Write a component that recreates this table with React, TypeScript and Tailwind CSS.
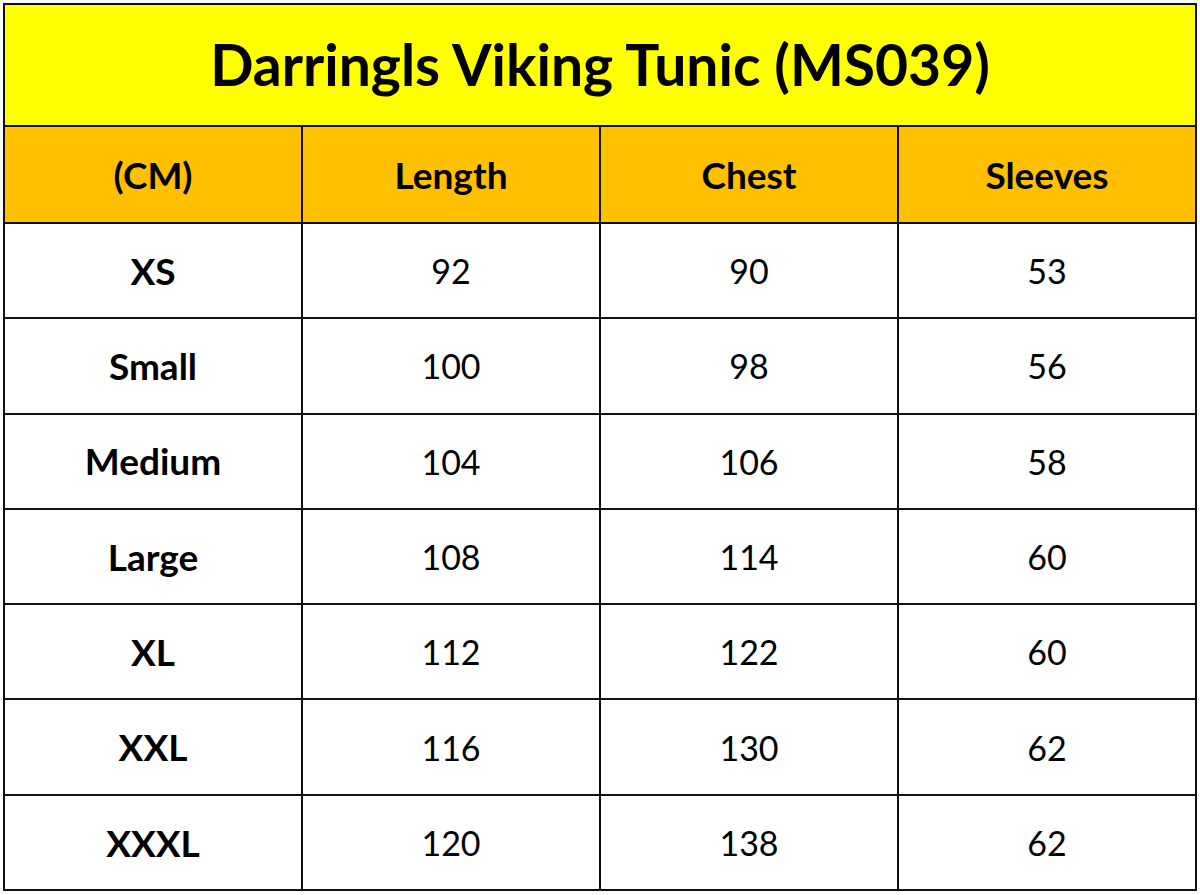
const rows: [string, number, number, number][] = [
  ["XS", 92, 90, 53],
  ["Small", 100, 98, 56],
  ["Medium", 104, 106, 58],
  ["Large", 108, 114, 60],
  ["XL", 112, 122, 60],
  ["XXL", 116, 130, 62],
  ["XXXL", 120, 138, 62],
];

const headers = ["(CM)", "Length", "Chest", "Sleeves"];

export default function App() {
  return (
    <div className="w-[1200px] h-[895px] bg-white pt-[3px] pl-[3px] font-['Lato','Liberation_Sans',sans-serif] text-black">
      <div className="w-[1194px] bg-[#111] p-[2px] grid grid-cols-4 gap-[2px]">
        <div className="col-span-4 h-[120px] bg-[#ffff00] flex items-center justify-center">
          <h1 className="text-[57px] font-bold">Darringls Viking Tunic (MS039)</h1>
        </div>
        {headers.map((h) => (
          <div key={h} className="h-[95px] bg-[#ffc000] flex items-center justify-center text-[37px] font-bold">
            {h}
          </div>
        ))}
        {rows.map(([size, length, chest, sleeves]) => (
          <div key={size} className="contents">
            <div className="h-[93.3px] bg-white flex items-center justify-center text-[37px] font-bold">{size}</div>
            <div className="h-[93.3px] bg-white flex items-center justify-center text-[34px]">{length}</div>
            <div className="h-[93.3px] bg-white flex items-center justify-center text-[34px]">{chest}</div>
            <div className="h-[93.3px] bg-white flex items-center justify-center text-[34px]">{sleeves}</div>
          </div>
        ))}
      </div>
    </div>
  );
}
